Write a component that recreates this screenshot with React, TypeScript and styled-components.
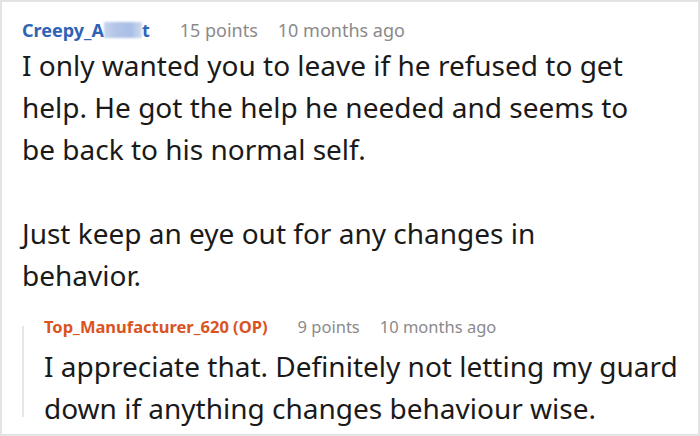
import React from 'react';
import styled, {createGlobalStyle} from "styled-components";

const GlobalStyle = createGlobalStyle`
  html, body {
    margin: 0;
    padding: 0;
    background: #fff;
  }
`

interface IHeaderProps {
    size: number,
}

interface IAuthorProps {
    color: string,
}

const Frame = styled.div`
  box-sizing: border-box;
  width: 700px;
  height: 436px;
  border: 2px solid #e3e3e3;
  padding: 13px 0 0 20px;
  font-family: "Noto Sans", "Open Sans", sans-serif;
  color: #1a1a1a;
  overflow: hidden;
`
const Header = styled.div<IHeaderProps>`
  display: flex;
  align-items: baseline;
  gap: 20px;
  font-size: ${props => props.size}px;
  line-height: 30px;
`
const Author = styled.span<IAuthorProps>`
  font-weight: 700;
  color: ${props => props.color};
  margin-right: 10px;
`
const Hidden = styled.span`
  display: inline-block;
  width: 38px;
  height: 16px;
  vertical-align: -1px;
  background: linear-gradient(90deg, rgba(160, 184, 226, 0.6), #b3c6e8 30%, #a9bfe6 70%, rgba(160, 184, 226, 0.5));
  filter: blur(1px);
`
const Meta = styled.span`
  color: #8a8a8a;
`
const Body = styled.div`
  max-width: 635px;
  font-size: 28px;
  line-height: 42px;
  margin-top: -1px;
`
const Paragraph = styled.p`
  margin: 0 0 42px;

  &:last-child {
    margin-bottom: 0;
  }
`
const Reply = styled.div`
  display: flex;
  gap: 20px;
  margin-top: 16px;
`
const Rail = styled.div`
  flex: none;
  width: 2px;
  margin: 14px 0 12px;
  background: #e6e6e6;
`
const ReplyContent = styled.div`
  flex: 1;
`
const ReplyBody = styled(Body)`
  margin-top: 3px;
`

const App = () => {
    return (
        <>
            <GlobalStyle/>
            <Frame>
                <Header size={18}>
                    <Author color={'#2f63b5'}>Creepy_A<Hidden/>t</Author>
                    <Meta>15 points</Meta>
                    <Meta>10 months ago</Meta>
                </Header>
                <Body>
                    <Paragraph>
                        I only wanted you to leave if he refused to get help. He got the help he needed and seems to
                        be back to his normal self.
                    </Paragraph>
                    <Paragraph>
                        Just keep an eye out for any changes in behavior.
                    </Paragraph>
                </Body>
                <Reply>
                    <Rail/>
                    <ReplyContent>
                        <Header size={16.5}>
                            <Author color={'#d9541f'}>Top_Manufacturer_620 (OP)</Author>
                            <Meta>9 points</Meta>
                            <Meta>10 months ago</Meta>
                        </Header>
                        <ReplyBody>
                            I appreciate that. Definitely not letting my guard down if anything changes behaviour wise.
                        </ReplyBody>
                    </ReplyContent>
                </Reply>
            </Frame>
        </>
    );
};

export default App;
